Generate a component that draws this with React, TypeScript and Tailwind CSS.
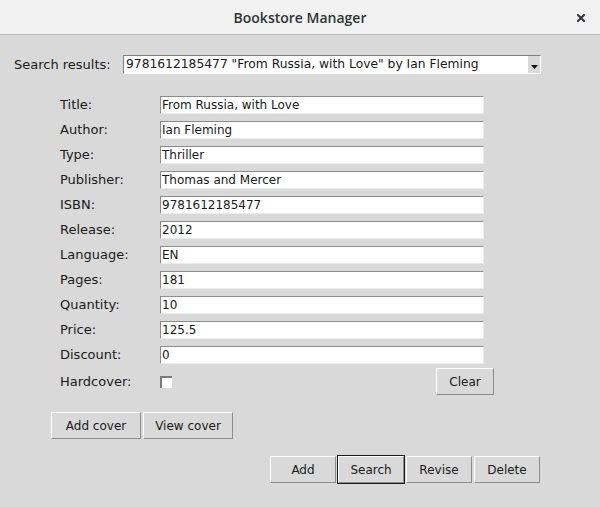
const fields = [
  { label: "Title:", value: "From Russia, with Love" },
  { label: "Author:", value: "Ian Fleming" },
  { label: "Type:", value: "Thriller" },
  { label: "Publisher:", value: "Thomas and Mercer" },
  { label: "ISBN:", value: "9781612185477" },
  { label: "Release:", value: "2012" },
  { label: "Language:", value: "EN" },
  { label: "Pages:", value: "181" },
  { label: "Quantity:", value: "10" },
  { label: "Price:", value: "125.5" },
  { label: "Discount:", value: "0" },
];

const font = { fontFamily: '"DejaVu Sans", sans-serif' };

const Btn = ({ label, w, focus }: { label: string; w: string; focus?: boolean }) => (
  <div className={focus ? "border border-[#1a1a1a]" : "border border-transparent"}>
    <button
      className={`${w} h-[27px] flex items-center justify-center bg-[#d9d9d9] border border-t-white border-l-white border-b-[#8c8c8c] border-r-[#8c8c8c] text-[12px] text-[#1a1a1a]`}
    >
      {label}
    </button>
  </div>
);

const App = () => {
  return (
    <div className="w-[600px] h-[507px] flex flex-col bg-[#d9d9d9]" style={font}>
      <div className="h-[35px] shrink-0 bg-[#f2f2f2] border-b border-[#b8b8b8] flex items-center justify-center relative">
        <span
          className="text-[14px] font-semibold text-[#2e3436]"
          style={{ fontFamily: '"Open Sans", "Noto Sans", sans-serif' }}
        >
          Bookstore Manager
        </span>
        <svg className="absolute right-[15px] top-[14px]" width="8" height="8" viewBox="0 0 8 8">
          <path d="M1 1 L7 7 M7 1 L1 7" stroke="#2e3436" strokeWidth="2" strokeLinecap="square" />
        </svg>
      </div>

      <div className="flex items-center pl-[14px] pt-[20px] text-[13px] leading-[19px] text-[#1a1a1a]">
        <span className="w-[109px]">Search results:</span>
        <div className="w-[418px] h-[19px] flex border border-t-[#7f7f7f] border-l-[#7f7f7f] border-b-white border-r-white">
          <div className="flex-1 bg-white flex items-center pl-[2px] leading-none text-[12.3px]">
            9781612185477 "From Russia, with Love" by Ian Fleming
          </div>
          <div className="w-[13px] bg-[#d9d9d9] border-l border-l-white flex items-end justify-center pb-[4px]">
            <svg width="7" height="4" viewBox="0 0 7 4">
              <path d="M0 0 H7 L3.5 4 Z" fill="#111" />
            </svg>
          </div>
        </div>
      </div>

      <div className="flex flex-col gap-[7px] pl-[60px] pt-[22px] text-[13px] leading-[18px] text-[#1a1a1a]">
        {fields.map((f) => (
          <div key={f.label} className="flex items-center h-[18px]">
            <span className="w-[100px]">{f.label}</span>
            <div className="w-[324px] h-[18px] bg-white border border-t-[#8c8c8c] border-l-[#8c8c8c] border-b-[#ececec] border-r-[#ececec] flex items-center pl-[1px] leading-none text-[12px]">
              {f.value}
            </div>
          </div>
        ))}
      </div>

      <div className="flex items-center pl-[60px] pt-[3px] text-[13px] leading-[18px] text-[#1a1a1a]">
        <span className="w-[100px]">Hardcover:</span>
        <div className="w-[12px] h-[12px] bg-white border-t-2 border-l-2 border-t-[#7a7a7a] border-l-[#7a7a7a]" />
        <div className="ml-auto mr-[105px]">
          <Btn label="Clear" w="w-[58px]" />
        </div>
      </div>

      <div className="flex gap-0 pl-[50px] pt-[15px]">
        <Btn label="Add cover" w="w-[90px]" />
        <Btn label="View cover" w="w-[90px]" />
      </div>

      <div className="flex justify-end pr-[59px] pt-[15px]">
        <Btn label="Add" w="w-[66px]" />
        <Btn label="Search" w="w-[66px]" focus />
        <Btn label="Revise" w="w-[66px]" />
        <Btn label="Delete" w="w-[66px]" />
      </div>
    </div>
  );
};

export default App;
